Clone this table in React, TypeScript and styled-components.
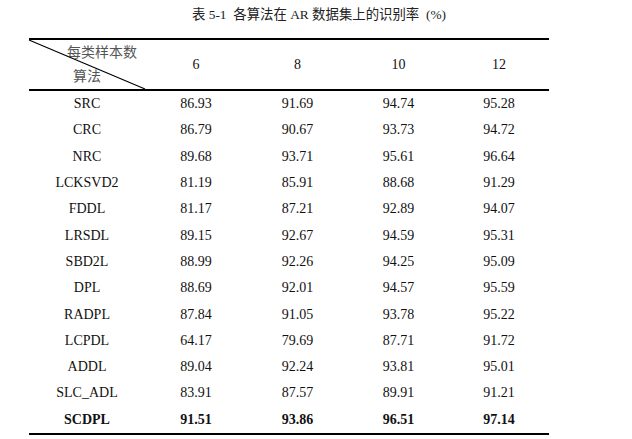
import React from "react";
import styled, { createGlobalStyle } from "styled-components";

const serifStack = `"Liberation Serif", "Times New Roman", Times, Tinos, "DejaVu Serif", "Noto Sans CJK SC", serif`;

const GlobalStyle = createGlobalStyle`
  html, body { margin: 0; padding: 0; background: #fff; }
  body { font-family: ${serifStack}; color: #111; }
`;

const Page = styled.div`
  width: 632px;
  height: 439px;
  padding-left: 29px;
  box-sizing: border-box;
  overflow: hidden;
  font-family: ${serifStack};
`;

const Title = styled.div`
  width: 544px;
  margin-left: 18px;
  padding-top: 5px;
  height: 20px;
  line-height: 20px;
  font-size: 13.4px;
  text-align: center;
  color: #222;
  margin-bottom: 13px;
  white-space: pre;
`;

const Table = styled.div`
  display: grid;
  grid-template-columns: 116px 102px 101px 101px 100px;
  width: 520px;
  border-top: 2px solid #000;
  border-bottom: 2px solid #000;
`;

const HeaderRow = styled.div`
  display: contents;
`;

const HeadCell = styled.div`
  height: 49px;
  border-bottom: 2px solid #000;
  display: flex;
  align-items: center;
  justify-content: center;
  font-size: 14px;
  position: relative;
`;

const CornerCell = styled(HeadCell)`
  flex-direction: column;
  align-items: stretch;
  justify-content: flex-start;
`;

const Diagonal = styled.svg`
  position: absolute;
  left: 0;
  top: 0;
  width: 100%;
  height: 100%;
  overflow: visible;
`;

const CornerTop = styled.div`
  font-family: "Noto Sans CJK SC", sans-serif;
  font-size: 14px;
  line-height: 18px;
  color: #555;
  text-align: right;
  padding: 2px 8px 0 0;
`;

const CornerBottom = styled.div`
  font-family: "Noto Sans CJK SC", sans-serif;
  font-size: 14px;
  line-height: 18px;
  color: #555;
  padding: 6px 0 0 44px;
`;

const Cell = styled.div<{ $bold?: boolean }>`
  height: 26.3px;
  display: flex;
  align-items: center;
  justify-content: center;
  font-size: 14px;
  font-weight: ${(p) => (p.$bold ? 700 : 400)};
  color: #111;
`;

const rows: [string, string, string, string, string][] = [
  ["SRC", "86.93", "91.69", "94.74", "95.28"],
  ["CRC", "86.79", "90.67", "93.73", "94.72"],
  ["NRC", "89.68", "93.71", "95.61", "96.64"],
  ["LCKSVD2", "81.19", "85.91", "88.68", "91.29"],
  ["FDDL", "81.17", "87.21", "92.89", "94.07"],
  ["LRSDL", "89.15", "92.67", "94.59", "95.31"],
  ["SBD2L", "88.99", "92.26", "94.25", "95.09"],
  ["DPL", "88.69", "92.01", "94.57", "95.59"],
  ["RADPL", "87.84", "91.05", "93.78", "95.22"],
  ["LCPDL", "64.17", "79.69", "87.71", "91.72"],
  ["ADDL", "89.04", "92.24", "93.81", "95.01"],
  ["SLC_ADL", "83.91", "87.57", "89.91", "91.21"],
  ["SCDPL", "91.51", "93.86", "96.51", "97.14"],
];

export default function App() {
  return (
    <>
      <GlobalStyle />
      <Page>
        <Title>表 5-1  各算法在 AR 数据集上的识别率  (%)</Title>
        <Table>
          <HeaderRow>
            <CornerCell>
              <Diagonal preserveAspectRatio="none" viewBox="0 0 100 100">
                <line x1="0" y1="0" x2="100" y2="100" stroke="#000" strokeWidth="1.2" vectorEffect="non-scaling-stroke" />
              </Diagonal>
              <CornerTop>每类样本数</CornerTop>
              <CornerBottom>算法</CornerBottom>
            </CornerCell>
            {["6", "8", "10", "12"].map((h) => (
              <HeadCell key={h}>{h}</HeadCell>
            ))}
          </HeaderRow>
          {rows.map((r, i) =>
            r.map((v, j) => (
              <Cell key={`${i}-${j}`} $bold={i === rows.length - 1}>
                {v}
              </Cell>
            ))
          )}
        </Table>
      </Page>
    </>
  );
}
